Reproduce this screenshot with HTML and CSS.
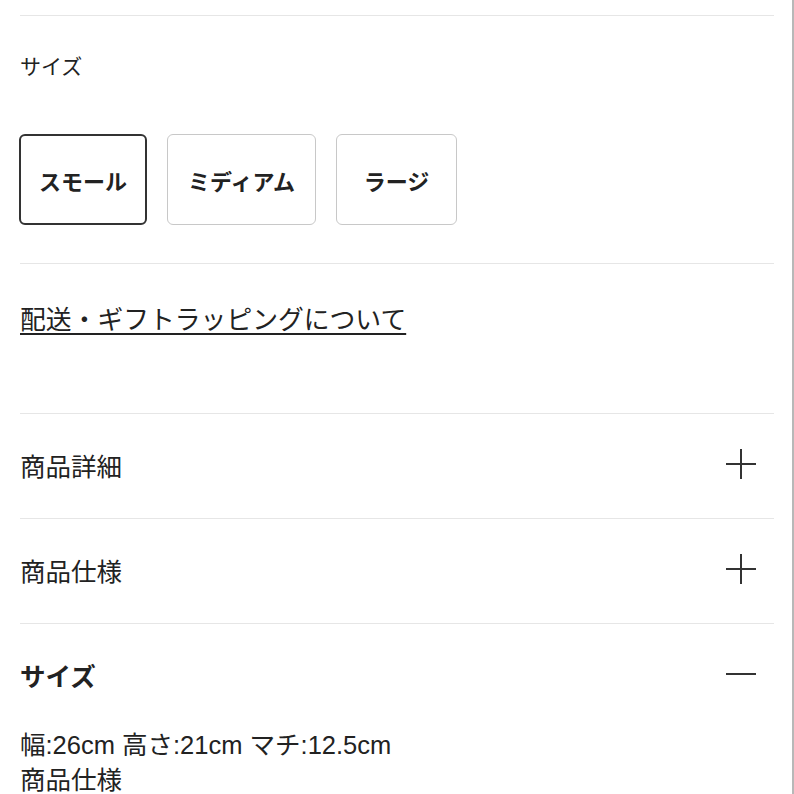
FILE: index.html
```html
<!DOCTYPE html>
<html lang="ja">
<head>
    <meta charset="UTF-8">
    <meta name="viewport" content="width=device-width, initial-scale=1.0">
    <title>商品詳細</title>
    <link rel="stylesheet" href="styles.css">
</head>
<body>
    <div class="page">
        <div class="size-select">
            <p class="size-label">サイズ</p>
            <div class="size-options">
                <button class="size-btn selected">スモール</button>
                <button class="size-btn">ミディアム</button>
                <button class="size-btn">ラージ</button>
            </div>
        </div>

        <div class="shipping">
            <a href="#" class="shipping-link">配送・ギフトラッピングについて</a>
        </div>

        <div class="accordion">
            <div class="acc-item">
                <div class="acc-head">
                    <span>商品詳細</span>
                    <svg class="acc-icon" viewBox="0 0 30 30"><path d="M0 15H30M15 0V30"/></svg>
                </div>
            </div>
            <div class="acc-item">
                <div class="acc-head">
                    <span>商品仕様</span>
                    <svg class="acc-icon" viewBox="0 0 30 30"><path d="M0 15H30M15 0V30"/></svg>
                </div>
            </div>
            <div class="acc-item open">
                <div class="acc-head">
                    <span>サイズ</span>
                    <svg class="acc-icon" viewBox="0 0 30 30"><path d="M0 15H30"/></svg>
                </div>
                <div class="acc-body">
                    幅:26cm 高さ:21cm マチ:12.5cm<br>
                    商品仕様
                </div>
            </div>
        </div>
    </div>
</body>
</html>
```

FILE: styles.css
```css
html, body {
    margin: 0;
    padding: 0;
    background-color: #fff;
}

body {
    font-family: "Liberation Sans", "Noto Sans CJK JP", sans-serif;
    color: #222;
}

.page {
    min-height: 100vh;
    padding: 15px 18px 0 20px;
    border-right: 2px solid #b8b8b8;
    box-sizing: border-box;
    overflow: hidden;
}

.size-select {
    border-top: 1px solid #e6e6e6;
    padding: 36px 0 38px;
}

.size-label {
    margin: 0 0 52px;
    font-size: 21px;
    line-height: 30px;
}

.size-options {
    display: flex;
    gap: 20px;
    margin-left: -1px;
}

.size-btn {
    height: 91px;
    min-width: 121px;
    padding: 0 20px;
    box-sizing: border-box;
    background: #fff;
    border: 1px solid #c8c8c8;
    border-radius: 6px;
    font-family: inherit;
    font-size: 22px;
    font-weight: bold;
    color: #222;
}

.size-btn.selected {
    padding: 0 18px;
    border: 2px solid #333;
}

.shipping {
    border-top: 1px solid #e6e6e6;
    padding: 38px 0 71px;
    line-height: 36px;
}

.shipping-link {
    font-size: 25.8px;
    color: #222;
    text-decoration: underline;
    text-decoration-thickness: 2px;
    text-underline-offset: 4px;
}

.acc-item {
    border-top: 1px solid #e6e6e6;
}

.acc-head {
    height: 104px;
    padding-bottom: 4px;
    box-sizing: border-box;
    display: flex;
    align-items: center;
    justify-content: space-between;
    font-size: 25.5px;
}

.open .acc-head {
    font-weight: bold;
}

.acc-icon {
    width: 30px;
    height: 30px;
    margin-right: 18px;
    stroke: #333;
    stroke-width: 2;
    fill: none;
}

.acc-body {
    font-size: 25.5px;
    line-height: 35px;
}
```
